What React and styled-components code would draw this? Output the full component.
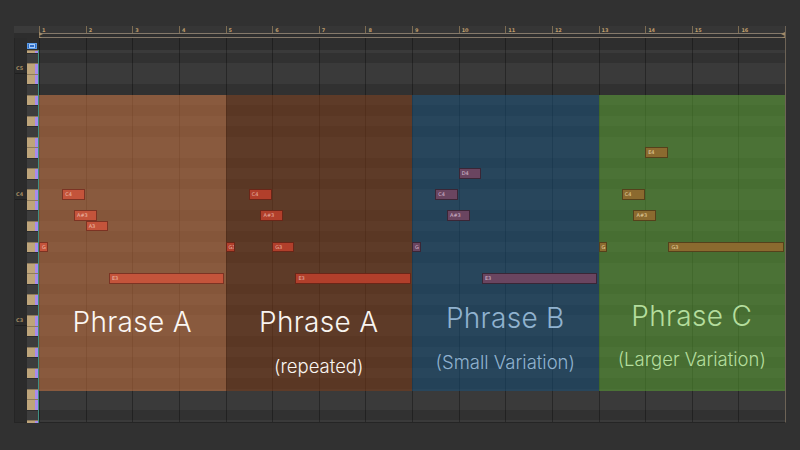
import React from 'react';
import styled, { createGlobalStyle } from 'styled-components';

const GlobalStyle = createGlobalStyle`
  html, body { margin: 0; padding: 0; background: #313131; }
  body { width: 800px; height: 450px; overflow: hidden; font-family: "Inter", "Noto Sans", sans-serif; }
  #root { width: 800px; height: 450px; }
`;

const ROW_H = 10.5;
const BARS = 16;
const CANVAS_W = 746;
const BAR_W = CANVAS_W / BARS;
const BEAT = BAR_W / 4;
const HEADER_H = 12;

const NAMES = ['C', 'C#', 'D', 'D#', 'E', 'F', 'F#', 'G', 'G#', 'A', 'A#', 'B'];
const nameOf = (m) => NAMES[m % 12] + (Math.floor(m / 12) - 1);
const midiOf = (n) => {
  const mm = n.match(/^([A-G]#?)(-?\d)$/);
  return NAMES.indexOf(mm[1]) + (parseInt(mm[2], 10) + 1) * 12;
};

const ROWS = [];
for (let m = 74; m >= 38; m--) {
  ROWS.push({
    m,
    name: nameOf(m),
    black: NAMES[m % 12].includes('#'),
    h: m === 74 ? 2.5 : m === 38 ? 3 : ROW_H,
  });
}
const rowTop = (m) => HEADER_H + 2.5 + (73 - m) * ROW_H;

const VARIANTS = {
  a: { fill: '#c4543b', border: '#7c3323', text: '#eec0b0' },
  r: { fill: '#b13f2b', border: '#6a2618', text: '#e8b6a8' },
  b: { fill: '#6a4560', border: '#3a2636', text: '#d8bfd4' },
  c: { fill: '#8b6a2f', border: '#55411b', text: '#e8d6a6' },
};

const NOTES = [
  { v: 'a', p: 'G3', t: 'G', s: 0, l: 0.8 },
  { v: 'a', p: 'C4', t: 'C4', s: 2, l: 2 },
  { v: 'a', p: 'A#3', t: 'A#3', s: 3, l: 2 },
  { v: 'a', p: 'A3', t: 'A3', s: 4, l: 1.95 },
  { v: 'a', p: 'E3', t: 'E3', s: 6, l: 9.92 },
  { v: 'r', p: 'G3', t: 'G3', s: 16, l: 0.85 },
  { v: 'r', p: 'C4', t: 'C4', s: 18, l: 2 },
  { v: 'r', p: 'A#3', t: 'A#3', s: 19, l: 2 },
  { v: 'r', p: 'G3', t: 'G3', s: 20, l: 1.95 },
  { v: 'r', p: 'E3', t: 'E3', s: 22, l: 9.95 },
  { v: 'b', p: 'G3', t: 'G', s: 32, l: 0.85 },
  { v: 'b', p: 'C4', t: 'C4', s: 34, l: 2 },
  { v: 'b', p: 'A#3', t: 'A#3', s: 35, l: 2 },
  { v: 'b', p: 'D4', t: 'D4', s: 36, l: 2 },
  { v: 'b', p: 'E3', t: 'E3', s: 38, l: 9.92 },
  { v: 'c', p: 'G3', t: 'G', s: 48, l: 0.8 },
  { v: 'c', p: 'C4', t: 'C4', s: 50, l: 2 },
  { v: 'c', p: 'A#3', t: 'A#3', s: 51, l: 2 },
  { v: 'c', p: 'E4', t: 'E4', s: 52, l: 2 },
  { v: 'c', p: 'G3', t: 'G3', s: 54, l: 9.95 },
];

const PHRASES = [
  { tint: 'rgba(203,116,65,0.55)', title: 'Phrase A', color: '#fbf7f3', top: 213, gap: 22 },
  { tint: 'rgba(123,60,25,0.55)', title: 'Phrase A', sub: '(repeated)', color: '#f9f5f1', top: 213, gap: 21.5 },
  { tint: 'rgba(25,80,120,0.55)', title: 'Phrase B', sub: '(Small Variation)', color: '#90b2cf', top: 209, gap: 21.5 },
  { tint: 'rgba(89,160,51,0.55)', title: 'Phrase C', sub: '(Larger Variation)', color: '#b4dd9d', top: 207, gap: 20 },
];

/* ---------- layout ---------- */
const Screen = styled.div`
  width: 800px;
  height: 450px;
  box-sizing: border-box;
  padding: 26px 0 0 14px;
  background: #313131;
`;

const Editor = styled.div`
  display: grid;
  grid-template-columns: 13px 12px 747px;
  grid-template-rows: 12px 12px 373px;
`;

const Corner = styled.div`
  grid-column: 1 / 3;
  grid-row: 1;
  background: linear-gradient(to bottom, #3b3b3b 0 7px, #2d2d2d 7px);
`;

/* ---------- ruler ---------- */
const Ruler = styled.div`
  grid-column: 3;
  grid-row: 1;
  display: flex;
  flex-direction: column;
  border-right: 1px solid #6d6356;
`;

const RulerNumbers = styled.div`
  display: flex;
  height: 7px;
  background: #363636;
`;

const RulerCell = styled.div`
  flex: 1;
  box-sizing: border-box;
  border-left: 1px solid #7d6c52;
  padding-left: 2px;
  font-family: "DejaVu Sans", sans-serif;
  font-weight: bold;
  font-size: 5px;
  line-height: 8px;
  color: #bf9c6b;
  white-space: nowrap;
`;

const LoopBar = styled.div`
  position: relative;
  height: 5px;
  box-sizing: border-box;
  border-top: 1px solid #85796a;
  border-bottom: 1px solid #85796a;
  background: #2f2f2f;
`;

const LoopMark = styled.svg`
  position: absolute;
  top: -2px;
  ${(p) => (p.$right ? 'right: 0;' : 'left: 0;')}
`;

/* ---------- left columns ---------- */
const LabelCol = styled.div`
  grid-column: 1;
  grid-row: 2 / 4;
  display: flex;
  flex-direction: column;
  background: #2b2b2b;
  border-left: 1px solid #252525;
  border-bottom: 1px solid #252525;
  box-sizing: border-box;
  padding-top: ${HEADER_H}px;
`;

const LabelRow = styled.div`
  flex: none;
  box-sizing: border-box;
  display: flex;
  align-items: flex-end;
  padding: 0 0 1.5px 1px;
  border-bottom: ${(p) => (p.$octave ? '1px solid #1f1f1f' : 'none')};
  font-family: "DejaVu Sans", sans-serif;
  font-weight: bold;
  font-size: 5px;
  line-height: 5px;
  color: #a58b63;
`;

const KeyCol = styled.div`
  grid-column: 2;
  grid-row: 2 / 4;
  display: flex;
  flex-direction: column;
`;

const KeyHeader = styled.div`
  height: ${HEADER_H}px;
  display: flex;
  align-items: flex-end;
  padding-bottom: 1px;
  box-sizing: border-box;
  background: #2d2d2d;
`;

const Marker = styled.div`
  width: 10px;
  height: 6px;
  box-sizing: border-box;
  background: #2e6bc6;
  border: 1px solid #5b9be6;
  display: flex;
  align-items: center;
  justify-content: center;
`;

const MarkerGlyph = styled.span`
  width: 4px;
  height: 2px;
  border: 0.5px solid #a9cbf5;
`;

const Keys = styled.div`
  display: flex;
  flex-direction: column;
  border-right: 1px solid #3f8f84;
  height: 373px;
  overflow: hidden;
`;

const Key = styled.div`
  flex: none;
  box-sizing: border-box;
  background: ${(p) =>
    p.$black ? '#3d3d3d' : 'linear-gradient(to right, #bea57b 0 8px, #a88bee 8px)'};
  border-top: 0.5px solid ${(p) => (p.$black ? '#2c2c2c' : '#8d7a5c')};
`;

/* ---------- canvas ---------- */
const Main = styled.div`
  grid-column: 3;
  grid-row: 2 / 4;
  border-right: 1px solid #6d6356;
  border-bottom: 1px solid #252525;
  box-sizing: border-box;
`;

const Canvas = styled.div`
  position: relative;
  width: ${CANVAS_W}px;
  height: 384px;
  overflow: hidden;
  display: flex;
  flex-direction: column;
`;

const HeaderStrip = styled.div`
  flex: none;
  height: ${HEADER_H}px;
  background: #2e2e2e;
`;

const GridRow = styled.div`
  flex: none;
  background: ${(p) => (p.$black ? '#313131' : '#3a3a3a')};
`;

const BarLines = styled.div`
  position: absolute;
  inset: 0;
  display: flex;
  pointer-events: none;
`;

const BarCell = styled.div`
  flex: 1;
  border-left: 1px solid rgba(0, 0, 0, 0.32);
`;

const Phrase = styled.div`
  position: absolute;
  top: 56.5px;
  height: 296.5px;
  display: flex;
  flex-direction: column;
  align-items: center;
  box-sizing: border-box;
`;

const Title = styled.div`
  font-family: "Inter", "Noto Sans", sans-serif;
  font-weight: 300;
  font-size: 28px;
  line-height: 28px;
  letter-spacing: 0.3px;
  white-space: nowrap;
`;

const Sub = styled.div`
  font-family: "Inter", "Noto Sans", sans-serif;
  font-weight: 300;
  font-size: 18.5px;
  line-height: 18px;
  white-space: nowrap;
`;

const Note = styled.div`
  position: absolute;
  height: ${ROW_H}px;
  box-sizing: border-box;
  background: ${(p) => VARIANTS[p.$v].fill};
  border: 1px solid ${(p) => VARIANTS[p.$v].border};
  color: ${(p) => VARIANTS[p.$v].text};
  font-family: "DejaVu Sans", sans-serif;
  font-size: 5px;
  line-height: 8.5px;
  padding-left: 2px;
  overflow: hidden;
  white-space: nowrap;
`;

export default function App() {
  return (
    <>
      <GlobalStyle />
      <Screen>
        <Editor>
          <Corner />
          <Ruler>
            <RulerNumbers>
              {Array.from({ length: BARS }, (_, i) => (
                <RulerCell key={i}>{i + 1}</RulerCell>
              ))}
            </RulerNumbers>
            <LoopBar>
              <LoopMark width="5" height="9" viewBox="0 0 5 9">
                <path d="M0 0 L4 2 L0 4 Z M0 4 L4 6.5 L0 9 Z" fill="#a08a68" />
              </LoopMark>
              <LoopMark $right width="5" height="9" viewBox="0 0 5 9">
                <path d="M5 0 L1 2 L5 4 Z M5 4 L1 6.5 L5 9 Z" fill="#a08a68" />
              </LoopMark>
            </LoopBar>
          </Ruler>

          <LabelCol>
            {ROWS.map((r) => (
              <LabelRow key={r.m} style={{ height: r.h }} $octave={r.name.startsWith('C') && !r.black}>
                {r.name.startsWith('C') && !r.black ? r.name : null}
              </LabelRow>
            ))}
          </LabelCol>

          <KeyCol>
            <KeyHeader>
              <Marker>
                <MarkerGlyph />
              </Marker>
            </KeyHeader>
            <Keys>
              {ROWS.map((r) => (
                <Key key={r.m} $black={r.black} style={{ height: r.h }} />
              ))}
            </Keys>
          </KeyCol>

          <Main>
            <Canvas>
              <HeaderStrip />
              {ROWS.map((r) => (
                <GridRow key={r.m} $black={r.black} style={{ height: r.h }} />
              ))}
              <BarLines>
                {Array.from({ length: BARS }, (_, i) => (
                  <BarCell key={i} />
                ))}
              </BarLines>
              {PHRASES.map((ph, i) => (
                <Phrase
                  key={i}
                  style={{
                    left: i * 4 * BAR_W,
                    width: 4 * BAR_W,
                    background: ph.tint,
                    paddingTop: ph.top,
                    color: ph.color,
                    gap: ph.gap,
                  }}
                >
                  <Title>{ph.title}</Title>
                  {ph.sub && <Sub>{ph.sub}</Sub>}
                </Phrase>
              ))}
              {NOTES.map((n, i) => (
                <Note
                  key={i}
                  $v={n.v}
                  style={{
                    left: n.s * BEAT,
                    width: n.l * BEAT - 0.5,
                    top: rowTop(midiOf(n.p)),
                  }}
                >
                  {n.t}
                </Note>
              ))}
            </Canvas>
          </Main>
        </Editor>
      </Screen>
    </>
  );
}
